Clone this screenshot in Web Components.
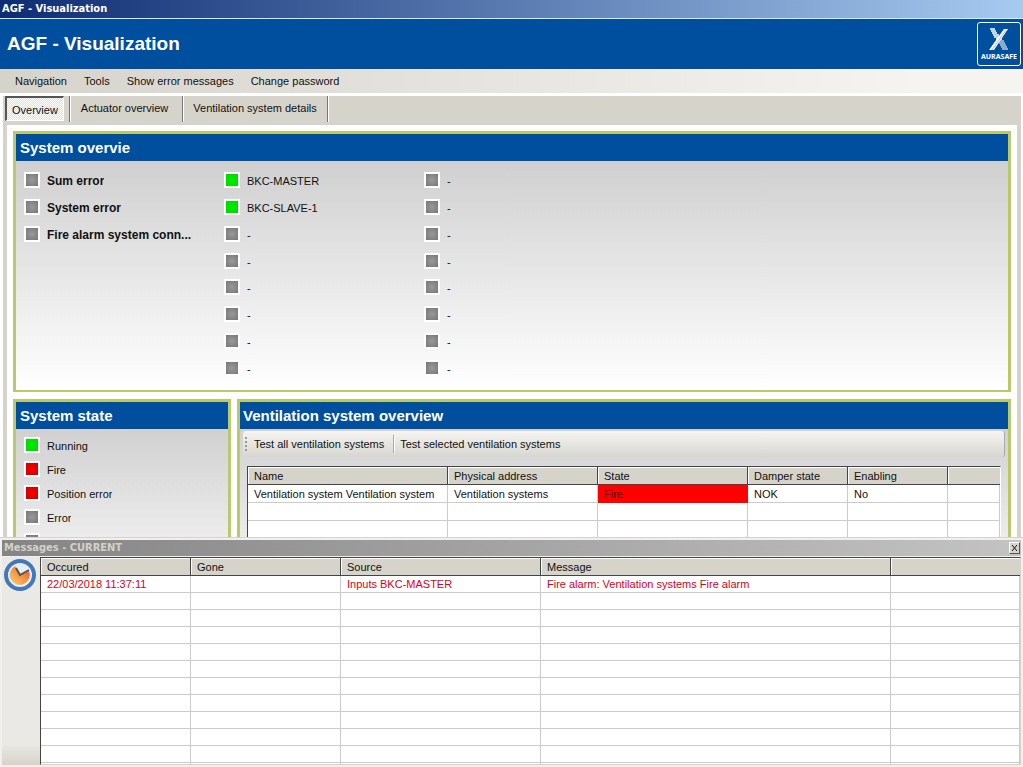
<!DOCTYPE html>
<html lang="en">
<head>
<meta charset="utf-8">
<title>AGF - Visualization</title>
<style>
html, body { margin: 0; height: 100%; }
body { font: 11px/14px "Liberation Sans", Arial, sans-serif; color: #111; background: #fff; }
</style>
</head>
<body>
<agf-app></agf-app>
<script>
const define = (name, html, setup) => {
  const template = document.createElement('template');
  template.innerHTML = html;
  customElements.define(name, class extends HTMLElement {
    connectedCallback() {
      if (this.shadowRoot) return;
      this.attachShadow({ mode: 'open' }).append(template.content.cloneNode(true));
      if (setup) setup(this, this.shadowRoot);
    }
  });
};

/* Status lamp with its label */
define('agf-lamp', `
<style>
:host { display: flex; align-items: center; gap: 7px; min-width: 0; }
i { flex: none; box-sizing: border-box; width: 16px; height: 16px; border: 2px solid #fff; background: radial-gradient(#999, #777); }
:host([state=ok]) i { background: radial-gradient(#00f000, #00d400); }
:host([state=alarm]) i { background: radial-gradient(#ff0000, #c80000); }
span { overflow: hidden; white-space: nowrap; text-overflow: ellipsis; padding-top: 2px; }
</style><i></i><span><slot></slot></span>`);

/* Framed panel with a blue caption */
define('agf-panel', `
<style>
:host { display: flex; flex-direction: column; box-sizing: border-box; min-width: 0; border: 3px solid #b8cb6c; border-bottom-width: 2px; background: linear-gradient(#cacaca, #fff); }
h2 { margin: 0; padding: 0 4px; background: #004f9e; color: #fff; font: bold 15px/27px "Liberation Sans", Arial, sans-serif; }
:host([flush]) h2 { padding: 0 3px; }
</style><h2></h2><slot></slot>`, (el, root) => {
  root.querySelector('h2').textContent = el.getAttribute('caption');
});

/* List view drawn as a ruled table */
define('agf-grid', `
<style>
:host { display: block; box-sizing: border-box; border-top: 1px solid #444; border-left: 1px solid #444; background: #fff; overflow: hidden; }
table { width: 100%; table-layout: fixed; border-collapse: separate; border-spacing: 0; }
th, td { box-sizing: border-box; height: var(--row, 18px); padding: 0 6px; border-right: 1px solid #ccc; border-bottom: 1px solid #ccc; text-align: left; font-weight: normal; line-height: 14px; white-space: nowrap; overflow: hidden; }
th { height: 18px; background: #d6d3ca; border-color: #444; box-shadow: inset 1px 1px #fff; }
th:last-child { border-right: 0; }
td.alarm { background: #f00; border-color: #f00; color: #500; }
tr.red td { color: #d8001c; }
</style><table><colgroup></colgroup><thead><tr></tr></thead><tbody></tbody></table>`, (el, root) => {
  const cols = el.getAttribute('columns').split('|').map(c => c.split(':'));
  const rows = [...el.querySelectorAll('agf-record')];
  for (const [name, width] of cols) {
    const col = document.createElement('col');
    if (width) col.style.width = width + 'px';
    root.querySelector('colgroup').append(col);
    const th = document.createElement('th');
    th.textContent = name;
    root.querySelector('thead tr').append(th);
  }
  const total = Number(el.getAttribute('lines'));
  for (let i = 0; i < total; i++) {
    const tr = root.querySelector('tbody').insertRow();
    const values = rows[i] ? rows[i].textContent.split('|') : [];
    if (rows[i] && rows[i].hasAttribute('red')) tr.className = 'red';
    cols.forEach((_, c) => {
      const td = tr.insertCell();
      td.textContent = values[c] || '';
      if (rows[i] && rows[i].getAttribute('alarm') === String(c)) td.className = 'alarm';
    });
  }
});

/* Company badge */
define('agf-logo', `
<style>
:host { display: flex; flex-direction: column; align-items: center; box-sizing: border-box; width: 44px; height: 44px; border: 1px solid #fff; border-radius: 3px; color: #fff; }
svg { display: block; margin-top: 4px; }
span { font: bold 7px/10px "Noto Sans", sans-serif; }
</style>
<svg width="26" height="25" viewBox="0 0 26 25" aria-hidden="true">
<path d="M4 2h5M5 4h5M6 6h5M7 8h6M8 10h6M10 12h6" stroke="#fff" stroke-width="1.400"/>
<path d="M12 14h6M13 16h6M14 18h6M15 20h6M16 22h6" stroke="#b4cce6" stroke-width="1.600"/>
<path d="M18 2h4L8 23H3z" fill="#fff"/>
<path d="M20 3 6 23" stroke="#5c8fc4" stroke-width=".6"/>
</svg><span>AURASAFE</span>`);

define('agf-header', `
<style>
:host { display: block; flex: none; }
.caption { height: 18px; padding-left: 2px; border-bottom: 1px solid #dce8f4; color: #fff; font: bold 11px/18px "DejaVu Sans Condensed", "DejaVu Sans", sans-serif; background: linear-gradient(90deg, #0e2c72, #a6caf0); }
header { display: flex; align-items: center; justify-content: space-between; height: 50px; padding: 0 2px 0 7px; background: #004f9e; color: #fff; }
h1 { margin: 0; font: bold 19px/24px "Liberation Sans", Arial, sans-serif; }
nav { display: flex; align-items: center; gap: 17px; height: 24px; padding-left: 15px; background: linear-gradient(90deg, #d6d3cb, #f5f4f1 90%); }
button { all: unset; font: 11px/14px "Liberation Sans", Tahoma, sans-serif; color: #111; }
</style>
<div class="caption">AGF - Visualization</div>
<header><h1>AGF - Visualization</h1><agf-logo></agf-logo></header>
<nav><button>Navigation</button><button>Tools</button><button>Show error messages</button><button>Change password</button></nav>`);

define('agf-tabs', `
<style>
:host { display: flex; align-items: flex-start; flex: none; height: 29px; margin: 3px 2px 0 3px; padding-left: 2px; background: #d6d3ca; }
button { box-sizing: border-box; height: 26px; margin: 0; padding: 0 14px 2px 11px; border: 0; border-right: 1px solid #777; box-shadow: 1px 0 #fff; background: none; font: 11px/14px "Liberation Sans", Arial, sans-serif; color: #111; }
button:last-child { padding: 0 10px 2px; }
button[aria-selected=true] { height: 25px; margin-right: 5px; padding: 2px 5px 0; border: 1px solid #fff; border-top: 2px solid #555; border-left: 2px solid #555; box-shadow: none; background: repeating-conic-gradient(#fff 0 25%, #e2e0da 0 50%) 0 0 / 2px 2px; }
i { width: 1px; height: 26px; background: #777; box-shadow: 1px 0 #fff; }
div { display: flex; }
</style>
<div role="tablist"><button role="tab" aria-selected="true">Overview</button><i></i><button role="tab">Actuator overview</button><button role="tab">Ventilation system details</button></div>`);

define('agf-overview', `
<style>
:host { display: grid; box-sizing: border-box; height: 229px; padding: 6px 8px 9px; grid-template-columns: repeat(3, 200px); grid-template-rows: repeat(8, 1fr); grid-auto-flow: column; }
.summary { font-size: 12px; font-weight: bold; padding-right: 24px; }
.summary:nth-of-type(3) { grid-row-end: span 6; align-self: start; height: 27px; }
</style>
<agf-lamp class="summary">Sum error</agf-lamp><agf-lamp class="summary">System error</agf-lamp><agf-lamp class="summary">Fire alarm system conn...</agf-lamp>
<agf-lamp state="ok">BKC-MASTER</agf-lamp><agf-lamp state="ok">BKC-SLAVE-1</agf-lamp>
${'<agf-lamp>-</agf-lamp>'.repeat(14)}`);

define('agf-state', `
<style>
:host { display: grid; grid-auto-rows: 24px; padding: 4px 8px 60px; }
</style>
<agf-lamp state="ok">Running</agf-lamp><agf-lamp state="alarm">Fire</agf-lamp><agf-lamp state="alarm">Position error</agf-lamp><agf-lamp>Error</agf-lamp><agf-lamp></agf-lamp>`);

define('agf-ventilation', `
<style>
:host { display: block; padding: 2px 3px 8px; }
.bar { display: flex; align-items: center; height: 26px; padding-left: 2px; border-right: 1px solid #aaa; border-radius: 3px; background: linear-gradient(#f6f5f2, #d8d6d0); }
.grip { width: 2px; height: 15px; margin-right: 7px; background: repeating-linear-gradient(#999 0 2px, transparent 2px 4px); }
button { all: unset; font: 11px/14px "Liberation Sans", Tahoma, sans-serif; color: #111; }
.line { width: 1px; height: 18px; margin: 0 6px 0 9px; background: #aaa; box-shadow: 1px 0 #fff; }
agf-grid { margin: 9px 4px 0; border-right: 1px solid #fff; }
</style>
<div class="bar"><i class="grip"></i><button>Test all ventilation systems</button><i class="line"></i><button>Test selected ventilation systems</button></div>
<agf-grid lines="6" columns="Name:200|Physical address:150|State:150|Damper state:100|Enabling:100|">
<agf-record alarm="2">Ventilation system Ventilation system|Ventilation systems|Fire|NOK|No</agf-record></agf-grid>`);

define('agf-messages', `
<style>
:host { display: flex; flex-direction: column; flex: none; box-sizing: border-box; height: 230px; padding: 2px; border-top: 1px solid #d6d3ca; background: #f1f0ed; }
.caption { display: flex; align-items: center; justify-content: space-between; height: 16px; padding: 0 1px 0 2px; background: linear-gradient(90deg, #858585, #c3c3c3); color: #d4d1c8; font: bold 11px/16px "DejaVu Sans Condensed", "DejaVu Sans", sans-serif; }
button { display: block; margin: 0; padding: 0; border: 0; background: none; }
.close { box-sizing: border-box; width: 11px; height: 12px; border: 1px solid; border-color: #fff #555 #555 #fff; background: #d6d3ca; }
.body { display: flex; flex: 1; min-height: 0; margin-top: 1px; }
aside { flex: none; width: 38px; padding-top: 1px; background: linear-gradient(#eae9e5 90%, #d6d3ca); }
agf-grid { --row: 17px; flex: 1; min-width: 0; border-right: 1px solid #d6d3ca; border-bottom: 1px solid #d6d3ca; }
svg { display: block; }
</style>
<div class="caption"><span>Messages - CURRENT</span><button class="close" aria-label="Close"><svg width="9" height="10" viewBox="0 0 9 10"><path d="m2 2 5 6m0-6-5 6" stroke="#111" fill="none"/></svg></button></div>
<div class="body"><aside><button aria-label="Message history"><svg width="34" height="34" viewBox="0 0 34 34">
<defs><linearGradient id="face" x1="1" x2="0" y2="1"><stop stop-color="#e4472f"/><stop offset=".4" stop-color="#f08a3c"/><stop offset="1" stop-color="#f9d070"/></linearGradient></defs>
<circle cx="18" cy="17" r="14" fill="#e4eef8" stroke="#4277b8" stroke-width="4"/>
<path d="M18 17 13 8a10 10 0 1 0 14 5z" fill="url(#face)"/>
<path d="m14 10 4 7 9-5" fill="none" stroke="#5a5145" stroke-width="2"/></svg></button></aside>
<agf-grid lines="12" columns="Occured:150|Gone:150|Source:200|Message:350|">
<agf-record red>22/03/2018 11:37:11||Inputs BKC-MASTER|Fire alarm: Ventilation systems Fire alarm</agf-record></agf-grid></div>`);

define('agf-app', `
<style>
:host { display: flex; flex-direction: column; height: 100vh; overflow: hidden; }
main { flex: 1; min-height: 0; overflow: hidden; display: grid; grid-template-columns: 218px 1fr; align-content: start; gap: 7px 6px; margin: 0 2px 0 3px; padding: 6px 6px 0; border: solid #d6d3ca; border-width: 0 4px; }
.wide { grid-column: 1 / -1; }
</style>
<agf-header></agf-header><agf-tabs></agf-tabs>
<main>
<agf-panel class="wide" caption="System overvie"><agf-overview></agf-overview></agf-panel>
<agf-panel caption="System state"><agf-state></agf-state></agf-panel>
<agf-panel flush caption="Ventilation system overview"><agf-ventilation></agf-ventilation></agf-panel>
</main>
<agf-messages></agf-messages>`);
</script>
</body>
</html>
